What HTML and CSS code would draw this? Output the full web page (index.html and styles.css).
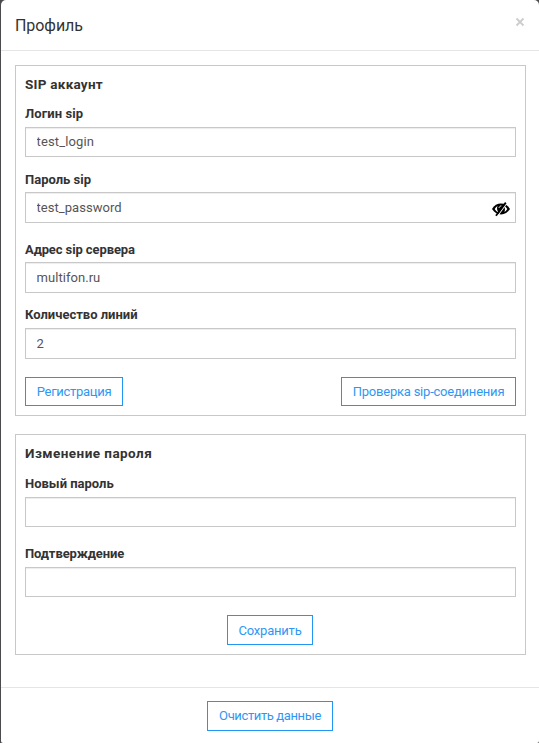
FILE: index.html
```html
<!DOCTYPE html>
<html lang="ru">
<head>
<meta charset="utf-8">
<title>Профиль</title>
<link rel="stylesheet" href="styles.css">
</head>
<body>
<main class="modal">
  <header class="modal-header">
    <h1 class="modal-title">Профиль</h1>
    <button class="close" type="button" aria-label="Закрыть">
      <svg width="10" height="10" viewBox="0 0 10 10"><path d="M1.5 1.5 8.5 8.5M8.5 1.5 1.5 8.5" fill="none" stroke="#ccc" stroke-width="1.8"/></svg>
    </button>
  </header>
  <div class="modal-body">
    <section class="panel">
      <h2 class="panel-title">SIP аккаунт</h2>
      <div class="field field-login">
        <label class="label spaced" for="login">Логин sip</label>
        <input class="input short wide-text" id="login" type="text" value="test_login">
      </div>
      <div class="field field-password">
        <label class="label" for="password">Пароль sip</label>
        <div class="input-wrap">
          <input class="input" id="password" type="text" value="test_password">
          <svg class="eye" width="18" height="16" viewBox="0 0 18 16">
            <path d="M0 8C2.2 4.4 5.300 2.600 9 2.600S15.800 4.400 18 8C15.800 11.600 12.700 13.400 9 13.400S2.200 11.600 0 8Z" fill="#000"/>
            <path d="M2.700 8C3.500 6.700 4.400 5.700 5.500 5.100C4.700 7 4.900 9.300 6.300 11.200C4.800 10.600 3.600 9.500 2.700 8ZM15.300 8C14.500 9.300 13.600 10.300 12.500 10.900C13.300 9 13.100 6.700 11.700 4.800C13.200 5.400 14.400 6.500 15.300 8Z" fill="#fff"/>
            <path d="M7 6.900C7.300 5.700 8.200 4.900 9.400 4.900" fill="none" stroke="#fff" stroke-width="1"/>
            <path d="M5.200 15.500 14.600 2.300" stroke="#fff" stroke-width="1.200"/>
            <path d="M4 14.800 13.800 1.600" stroke="#000" stroke-width="1.800"/>
          </svg>
        </div>
      </div>
      <div class="field field-server">
        <label class="label tight" for="server">Адрес sip сервера</label>
        <input class="input" id="server" type="text" value="multifon.ru">
      </div>
      <div class="field field-lines">
        <label class="label" for="lines">Количество линий</label>
        <input class="input" id="lines" type="text" value="2">
      </div>
      <div class="actions">
        <button class="btn btn-register" type="button">Регистрация</button>
        <button class="btn btn-check" type="button">Проверка sip-соединения</button>
      </div>
    </section>
    <section class="panel">
      <h2 class="panel-title panel-title-wide">Изменение пароля</h2>
      <div class="field field-new">
        <label class="label" for="new">Новый пароль</label>
        <input class="input short" id="new" type="password">
      </div>
      <div class="field field-confirm">
        <label class="label tight" for="confirm">Подтверждение</label>
        <input class="input short" id="confirm" type="password">
      </div>
      <div class="actions actions-center">
        <button class="btn btn-save" type="button">Сохранить</button>
      </div>
    </section>
  </div>
  <footer class="modal-footer">
    <button class="btn btn-clear" type="button">Очистить данные</button>
  </footer>
</main>
</body>
</html>
```
FILE: styles.css
```css
* { box-sizing: border-box; }
body {
  margin: 0;
  height: 743px;
  padding-left: 1px;
  overflow: hidden;
  background: #4b4b4d;
  font-family: Roboto, "Liberation Sans", sans-serif;
  color: #333;
}
.modal {
  height: 743px;
  background: #fff;
  border-radius: 5px 5px 2px 2px;
}
.modal-header {
  display: flex;
  justify-content: space-between;
  height: 51px;
  padding: 15px 14px 0;
  border-bottom: 1px solid #e5e5e5;
}
.modal-title {
  margin: 0;
  font-size: 16px;
  font-weight: 400;
  line-height: 22px;
  letter-spacing: -0.05px;
}
.close {
  width: 10px;
  height: 10px;
  margin-top: 2px;
  padding: 0;
  border: 0;
  background: none;
}
.close svg { display: block; }
.modal-body {
  display: flex;
  flex-direction: column;
  gap: 18px;
  height: 636px;
  padding: 14px 13px 0 14px;
}
.panel {
  padding: 8px 9px 9px;
  border: 1px solid #c8c8c8;
}
.panel-title {
  margin: 0;
  font-size: 13.5px;
  font-weight: 700;
  line-height: 20px;
  letter-spacing: 0.25px;
}
.panel-title-wide { letter-spacing: 0.45px; }
.field {
  display: flex;
  flex-direction: column;
  gap: 4px;
}
.field-login { margin-top: 11px; }
.field-password { margin-top: 14px; gap: 3px; }
.field-server { margin-top: 18px; gap: 3px; }
.field-lines { margin-top: 13px; }
.field-new { margin-top: 12px; }
.field-confirm { margin-top: 18px; }
.label {
  font-size: 13px;
  font-weight: 700;
  line-height: 18px;
}
.spaced { letter-spacing: 0.1px; }
.tight { letter-spacing: -0.1px; }
.input {
  display: block;
  width: 100%;
  height: 31px;
  padding: 0 11px 1px 10.5px;
  border: 1px solid #c8c8c8;
  border-radius: 0;
  background: #fff;
  box-shadow: inset 0 1px 1px rgba(0, 0, 0, 0.075);
  color: #555;
  font: 400 13px/20px Roboto, "Liberation Sans", sans-serif;
  letter-spacing: 0.05px;
}
.short { height: 30px; }
.wide-text { letter-spacing: 0.15px; }
.input-wrap { position: relative; }
.eye {
  position: absolute;
  top: 8.5px;
  right: 6px;
}
.actions {
  display: flex;
  justify-content: space-between;
  margin-top: 18px;
}
.actions-center { justify-content: center; padding-right: 1px; }
.btn {
  height: 30px;
  padding: 0;
  border: 1px solid #2196f3;
  background: #fff;
  color: #2f97f3;
  font: 400 13px/20px Roboto, "Liberation Sans", sans-serif;
  white-space: nowrap;
}
.btn-register { width: 98px; height: 29px; letter-spacing: -0.3px; }
.btn-check { width: 175px; height: 29px; letter-spacing: -0.22px; }
.btn-save { width: 86px; padding-top: 1px; letter-spacing: -0.2px; }
.btn-clear { width: 126px; letter-spacing: -0.38px; }
.modal-footer {
  display: flex;
  justify-content: center;
  height: 56px;
  padding-top: 13px;
  border-top: 1px solid #e5e5e5;
}
```
